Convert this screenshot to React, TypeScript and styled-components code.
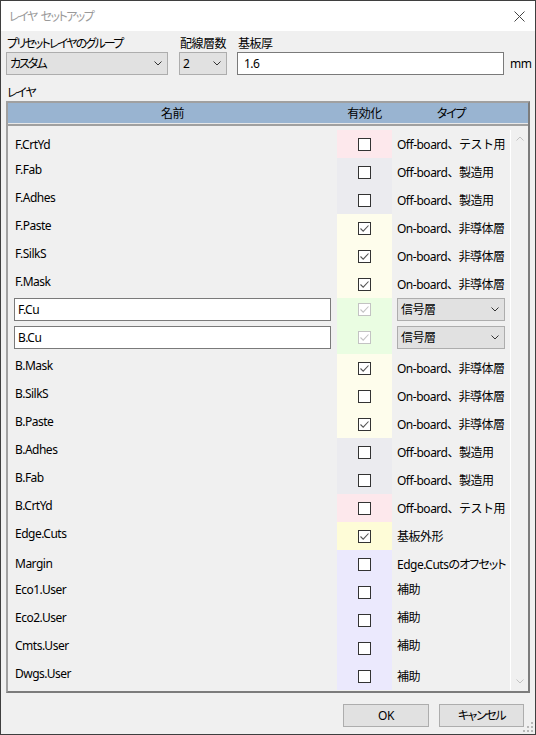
import React from "react";
import styled, { createGlobalStyle } from "styled-components";

const Global = createGlobalStyle`
  html, body { margin: 0; padding: 0; background: #f0f0f0; }
  * { box-sizing: border-box; }
  body {
    font-family: "Noto Sans", "Noto Sans CJK JP", sans-serif;
    font-size: 12px;
    letter-spacing: -0.5px;
    color: #000;
  }
`;

const K = styled.span<{ $ls?: number }>`
  font-feature-settings: "palt";
  letter-spacing: ${(p) => p.$ls ?? -1.5}px;
`;

const Window = styled.div`
  position: relative;
  width: 536px;
  height: 735px;
  border: 1px solid #3f3f3f;
  background: #f0f0f0;
  display: flex;
  flex-direction: column;
  overflow: hidden;
`;

const TitleBar = styled.div`
  height: 30px;
  background: #fff;
  display: flex;
  align-items: center;
  justify-content: space-between;
  padding: 0 10px 0 8px;
  flex: none;
`;

const Title = styled.span`
  color: #9a9a9a;
  font-size: 12px;
  line-height: 15px;
  display: flex;
  gap: 4px;
`;

const Content = styled.div`
  flex: 1;
  display: flex;
  flex-direction: column;
  padding: 5px 5px 0 5px;
`;

const TopRow = styled.div`
  display: flex;
  align-items: flex-end;
`;

const Field = styled.div<{ $w: number; $ml?: number }>`
  display: flex;
  flex-direction: column;
  gap: 1px;
  width: ${(p) => p.$w}px;
  margin-left: ${(p) => p.$ml ?? 0}px;
  flex: none;
`;

const Label = styled.div`
  line-height: 15px;
  height: 15px;
  white-space: nowrap;
  padding-left: 1px;
`;

const Combo = styled.div<{ $w?: number }>`
  height: 23px;
  width: ${(p) => (p.$w ? `${p.$w}px` : "100%")};
  background: #e1e1e1;
  border: 1px solid #adadad;
  display: flex;
  align-items: center;
  justify-content: space-between;
  padding: 0 5px 0 3px;
  line-height: 15px;
  white-space: nowrap;
`;

const TextInput = styled.div<{ $w?: number }>`
  height: 23px;
  width: ${(p) => (p.$w ? `${p.$w}px` : "100%")};
  background: #fff;
  border: 1px solid #7a7a7a;
  display: flex;
  align-items: center;
  padding: 0 6px;
  line-height: 15px;
  white-space: nowrap;
`;

const Unit = styled.span`
  margin-left: 6px;
  height: 23px;
  display: flex;
  align-items: center;
`;

const SectionLabel = styled.div`
  margin-top: 10px;
  height: 15px;
  line-height: 15px;
  padding-left: 1px;
`;

const Grid = styled.div`
  margin-top: 1px;
  height: 592px;
  width: 524px;
  border: 2px solid;
  border-color: #a0a0a0 #7c7c7c #7c7c7c #a0a0a0;
  display: flex;
  flex-direction: column;
`;

const Header = styled.div`
  height: 21px;
  display: grid;
  grid-template-columns: 329px 55px 118px 1fr;
  background: #99b4d1;
  border-bottom: 1px solid #e8e8e8;
  flex: none;
`;

const HeadCell = styled.div`
  display: flex;
  align-items: center;
  justify-content: center;
  line-height: 15px;
`;

const Body = styled.div`
  flex: 1;
  border-top: 2px solid #a0a0a0;
  padding: 4px 0 1px 0;
  display: flex;
`;

const Rows = styled.div`
  width: 502px;
  display: flex;
  flex-direction: column;
`;

const Row = styled.div<{ $top?: boolean }>`
  height: 28px;
  display: grid;
  grid-template-columns: 329px 55px 118px;
  align-items: ${(p) => (p.$top ? "start" : "center")};
`;

const NameCell = styled.div<{ $up: number }>`
  padding-left: 7px;
  line-height: 15px;
  white-space: nowrap;
  margin-bottom: ${(p) => p.$up * 2}px;
`;

const NameInput = styled.div`
  margin-left: 6px;
  width: 317px;
  height: 23px;
  background: #fff;
  border: 1px solid #7a7a7a;
  display: flex;
  align-items: center;
  padding-left: 3px;
  line-height: 15px;
`;

const EnableCell = styled.div<{ $bg: string }>`
  background: ${(p) => p.$bg};
  align-self: stretch;
  display: flex;
  justify-content: center;
`;

const EnableInner = styled.div<{ $top?: boolean }>`
  height: ${(p) => (p.$top ? "23px" : "28px")};
  width: 100%;
  display: flex;
  align-items: center;
  justify-content: center;
`;

const Box = styled.div<{ $disabled?: boolean }>`
  width: 13px;
  height: 13px;
  background: #fff;
  border: 1px solid ${(p) => (p.$disabled ? "#c3c3c3" : "#333")};
  display: flex;
  align-items: center;
  justify-content: center;
`;

const TypeCell = styled.div<{ $up?: number }>`
  padding-left: 5px;
  line-height: 15px;
  white-space: nowrap;
  margin-bottom: ${(p) => (p.$up ?? 0) * 2}px;
`;

const Scrollbar = styled.div`
  flex: 1;
  border-left: 1px solid #fff;
  display: flex;
  flex-direction: column;
  justify-content: space-between;
  align-items: center;
`;

const ArrowBox = styled.div`
  width: 17px;
  height: 17px;
  display: flex;
  align-items: center;
  justify-content: center;
`;

const Footer = styled.div`
  display: flex;
  justify-content: flex-end;
  gap: 10px;
  padding: 11px 6px 0 0;
`;

const Button = styled.div<{ $w: number }>`
  width: ${(p) => p.$w}px;
  height: 23px;
  background: #e1e1e1;
  border: 1px solid #adadad;
  display: flex;
  align-items: center;
  justify-content: center;
  line-height: 15px;
`;

const Grip = styled.svg`
  position: absolute;
  right: 1px;
  bottom: 1px;
`;

const Chevron = ({ color = "#333", up = false }: { color?: string; up?: boolean }) => (
  <svg width="8" height="5" viewBox="0 0 8 5">
    <path
      d={up ? "M0.5 4.5 L4 1 L7.5 4.5" : "M0.5 0.5 L4 4 L7.5 0.5"}
      fill="none"
      stroke={color}
      strokeWidth="1"
    />
  </svg>
);

const Check = ({ color }: { color: string }) => (
  <svg width="11" height="11" viewBox="0 0 11 11">
    <path d="M1.5 5.5 L4.2 8.2 L9.5 2.5" fill="none" stroke={color} strokeWidth="1.1" />
  </svg>
);

const PINK = "#fde8ec";
const GREY = "#ebebef";
const YEL = "#fefdec";
const GREEN = "#eafde2";
const EDGE = "#fefcd7";
const LAV = "#ebe9fd";

type Layer = {
  name: string;
  bg: string;
  checked: boolean;
  type: React.ReactNode;
  cu?: boolean;
  up?: number;
  typeUp?: number;
};

const OFF_TEST = "Off-board、テスト用";
const OFF_FAB = "Off-board、製造用";
const ON_NC = "On-board、非導体層";
const AUX = "補助";

const layers: Layer[] = [
  { name: "F.CrtYd", bg: PINK, checked: false, type: OFF_TEST, up: 0 },
  { name: "F.Fab", bg: GREY, checked: false, type: OFF_FAB },
  { name: "F.Adhes", bg: GREY, checked: false, type: OFF_FAB },
  { name: "F.Paste", bg: YEL, checked: true, type: ON_NC },
  { name: "F.SilkS", bg: YEL, checked: true, type: ON_NC },
  { name: "F.Mask", bg: YEL, checked: true, type: ON_NC },
  { name: "F.Cu", bg: GREEN, checked: true, type: "信号層", cu: true },
  { name: "B.Cu", bg: GREEN, checked: true, type: "信号層", cu: true },
  { name: "B.Mask", bg: YEL, checked: true, type: ON_NC },
  { name: "B.SilkS", bg: YEL, checked: false, type: ON_NC },
  { name: "B.Paste", bg: YEL, checked: true, type: ON_NC },
  { name: "B.Adhes", bg: GREY, checked: false, type: OFF_FAB },
  { name: "B.Fab", bg: GREY, checked: false, type: OFF_FAB },
  { name: "B.CrtYd", bg: PINK, checked: false, type: OFF_TEST },
  { name: "Edge.Cuts", bg: EDGE, checked: true, type: "基板外形" },
  {
    name: "Margin",
    bg: LAV,
    checked: false,
    up: 1,
    type: (
      <>
        Edge.Cuts<K $ls={-0.9}>のオフセット</K>
      </>
    ),
  },
  { name: "Eco1.User", bg: LAV, checked: false, type: AUX, typeUp: 3 },
  { name: "Eco2.User", bg: LAV, checked: false, type: AUX, typeUp: 3 },
  { name: "Cmts.User", bg: LAV, checked: false, type: AUX, typeUp: 3 },
  { name: "Dwgs.User", bg: LAV, checked: false, type: AUX },
];

export default function App() {
  return (
    <>
      <Global />
      <Window>
        <TitleBar>
          <Title>
            <K>レイヤ</K>
            <K>セットアップ</K>
          </Title>
          <svg width="11" height="11" viewBox="0 0 11 11">
            <path d="M0.5 0.5 L10.5 10.5 M10.5 0.5 L0.5 10.5" stroke="#444" strokeWidth="1" />
          </svg>
        </TitleBar>
        <Content>
          <TopRow>
            <Field $w={162}>
              <Label>
                <K $ls={-1.8}>プリセットレイヤのグループ</K>
              </Label>
              <Combo>
                <K $ls={-2}>カスタム</K>
                <Chevron />
              </Combo>
            </Field>
            <Field $w={48} $ml={11}>
              <Label>配線層数</Label>
              <Combo>
                <span>2</span>
                <Chevron />
              </Combo>
            </Field>
            <Field $w={267} $ml={10}>
              <Label>基板厚</Label>
              <TextInput>1.6</TextInput>
            </Field>
            <Unit>mm</Unit>
          </TopRow>
          <SectionLabel>
            <K $ls={-1.3}>レイヤ</K>
          </SectionLabel>
          <Grid>
            <Header>
              <HeadCell>名前</HeadCell>
              <HeadCell>有効化</HeadCell>
              <HeadCell>
                <K $ls={-1.3}>タイプ</K>
              </HeadCell>
              <HeadCell />
            </Header>
            <Body>
              <Rows>
                {layers.map((l) => (
                  <Row key={l.name} $top={l.cu}>
                    {l.cu ? (
                      <NameInput>{l.name}</NameInput>
                    ) : (
                      <NameCell $up={l.up ?? 3}>{l.name}</NameCell>
                    )}
                    <EnableCell $bg={l.bg}>
                      <EnableInner $top={l.cu}>
                        <Box $disabled={l.cu}>
                          {l.checked && <Check color={l.cu ? "#c3c3c3" : "#555"} />}
                        </Box>
                      </EnableInner>
                    </EnableCell>
                    {l.cu ? (
                      <TypeCell>
                        <Combo $w={108}>
                          <span>{l.type}</span>
                          <Chevron />
                        </Combo>
                      </TypeCell>
                    ) : (
                      <TypeCell $up={l.typeUp}>{l.type}</TypeCell>
                    )}
                  </Row>
                ))}
              </Rows>
              <Scrollbar>
                <ArrowBox>
                  <Chevron up color="#c2c2c2" />
                </ArrowBox>
                <ArrowBox>
                  <Chevron color="#c2c2c2" />
                </ArrowBox>
              </Scrollbar>
            </Body>
          </Grid>
          <Footer>
            <Button $w={86}>OK</Button>
            <Button $w={85}>
              <K $ls={-1.4}>キャンセル</K>
            </Button>
          </Footer>
        </Content>
        <Grip width="11" height="11" viewBox="0 0 11 11">
          <rect x="8" y="0" width="2" height="2" fill="#b8b8b8" />
          <rect x="4" y="4" width="2" height="2" fill="#b8b8b8" />
          <rect x="8" y="4" width="2" height="2" fill="#b8b8b8" />
          <rect x="0" y="8" width="2" height="2" fill="#b8b8b8" />
          <rect x="4" y="8" width="2" height="2" fill="#b8b8b8" />
          <rect x="8" y="8" width="2" height="2" fill="#b8b8b8" />
        </Grip>
      </Window>
    </>
  );
}
